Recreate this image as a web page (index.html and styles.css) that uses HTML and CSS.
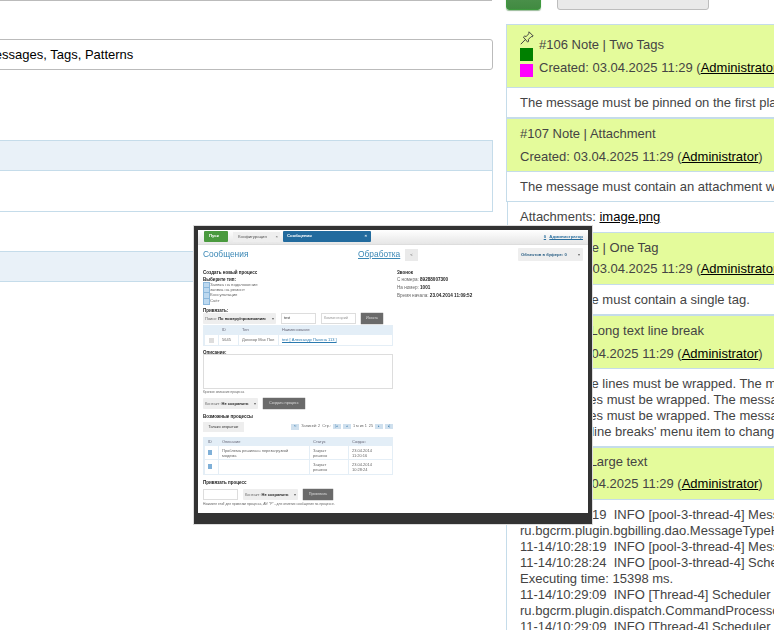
FILE: index.html
```html
<!DOCTYPE html>
<html lang="en">
<head>
<meta charset="utf-8">
<title>Messages</title>
<link rel="stylesheet" href="styles.css">
</head>
<body>
<div class="page">
  <section class="left">
    <div class="top-line"></div>
    <div class="text-field">Messages, Tags, Patterns</div>
    <div class="panel">
      <div class="panel-head"></div>
      <div class="panel-body"></div>
    </div>
    <div class="panel panel-second">
      <div class="panel-head"></div>
    </div>
  </section>

  <section class="right">
    <div class="actions">
      <div class="btn-green"></div>
      <div class="btn-gray"></div>
    </div>

    <article class="card">
      <header class="card-head tagged">
        <div class="tags">
          <svg class="pin" viewBox="0 0 14 14" width="14" height="14"><path d="M9 .8l4.200 4.200-1 .8-1-.2-2.800 2.800.2 1.800-.9 1L3.400 6.100l1-.9 1.800.2L9 2.600 8.800 1.600zM5.500 8.400L.8 13.200" fill="none" stroke="#444" stroke-width="1" stroke-linejoin="round"/></svg>
          <span class="tag tag-green"></span>
          <span class="tag tag-magenta"></span>
        </div>
        <div class="head-text">
          <div class="line">#106 Note | Two Tags</div>
          <div class="line">Created: 03.04.2025 11:29 (<a href="#">Administrator</a>)</div>
        </div>
      </header>
      <div class="card-body"><div class="row">The message must be pinned on the first place in the list of messages.</div></div>
    </article>

    <article class="card">
      <header class="card-head">
        <div class="line">#107 Note | Attachment</div>
        <div class="line">Created: 03.04.2025 11:29 (<a href="#">Administrator</a>)</div>
      </header>
      <div class="card-body"><div class="row">The message must contain an attachment with an image file.</div></div>
    </article>
    <div class="attachments">Attachments: <a href="#">image.png</a></div>

    <article class="card card-flat">
      <header class="card-head tagged">
        <div class="tags tags-single"><span class="tag tag-green"></span></div>
        <div class="head-text head-tight">
          <div class="line">#108 Note | One Tag</div>
          <div class="line">Created: 03.04.2025 11:29 (<a href="#">Administrator</a>)</div>
        </div>
      </header>
      <div class="card-body"><div class="row">The message must contain a single tag.</div></div>
    </article>

    <article class="card">
      <header class="card-head">
        <div class="line">#109 Note | Long text line break</div>
        <div class="line">Created: 03.04.2025 11:29 (<a href="#">Administrator</a>)</div>
      </header>
      <div class="card-body">
        <div class="row">The message lines must be wrapped. The message lines must be wrapped.</div>
        <div class="row">message lines must be wrapped. The message lines must be wrapped.</div>
        <div class="row">message lines must be wrapped. The message lines must be wrapped.</div>
        <div class="row">Use the 'No line breaks' menu item to change the mode.</div>
      </div>
    </article>

    <article class="card">
      <header class="card-head card-head-tight">
        <div class="line">#110 Note | Large text</div>
        <div class="line">Created: 03.04.2025 11:29 (<a href="#">Administrator</a>)</div>
      </header>
      <div class="card-body">
        <div class="row">11-14/10:28:19  INFO [pool-3-thread-4] MessageTypeHelper</div>
        <div class="row">ru.bgcrm.plugin.bgbilling.dao.MessageTypeHelper</div>
        <div class="row">11-14/10:28:19  INFO [pool-3-thread-4] MessageTypeHelper</div>
        <div class="row">11-14/10:28:24  INFO [pool-3-thread-4] Scheduler</div>
        <div class="row">Executing time: 15398 ms.</div>
        <div class="row">11-14/10:29:09  INFO [Thread-4] Scheduler run</div>
        <div class="row">ru.bgcrm.plugin.dispatch.CommandProcessor</div>
        <div class="row">11-14/10:29:09  INFO [Thread-4] Scheduler run</div>
      </div>
    </article>
  </section>

  <aside class="preview">
    <div class="shot">
      <div class="m-bar">
        <span class="m-start">Пуск</span>
        <span class="m-tab">Конфигурация<i>×</i></span>
        <span class="m-tab m-tab-active">Сообщения<i>×</i></span>
        <span class="m-user"><b>0</b> <b>Администратор</b></span>
      </div>
      <div class="m-content">
        <div class="m-title-row">
          <span class="m-title">Сообщения</span>
          <a class="m-title-link" href="#">Обработка</a>
          <span class="m-back">&lt;</span>
          <span class="m-buffer"><b>Объектов в буфере: 0</b><i>▾</i></span>
        </div>
        <div class="m-columns">
          <div class="m-main">
            <div class="m-label">Создать новый процесс</div>
            <div class="m-label">Выберите тип:</div>
            <ul class="m-types">
              <li>Заявка на подключение</li>
              <li>заявка на ремонт</li>
              <li>Консультация</li>
              <li>Счёт</li>
            </ul>
            <div class="m-label m-bind">Привязать:</div>
            <div class="m-controls m-search">
              <span class="m-select m-w72">Поиск: <b>По номеру/примечанию</b><i>▾</i></span>
              <span class="m-input m-w35">test</span>
              <span class="m-input m-w35 m-muted">Комментарий</span>
              <span class="m-dark m-w22">Искать</span>
            </div>
            <div class="m-table m-table-a">
              <div class="m-tr m-th"><span></span><span>ID</span><span>Тип</span><span>Наименование</span></div>
              <div class="m-tr m-td"><span><em class="m-check"></em></span><span>5645</span><span>Договор Мах Пол</span><span><a href="#">test [ Александр Панина 113 ]</a></span></div>
            </div>
            <div class="m-label m-desc">Описание:</div>
            <div class="m-textarea"></div>
            <div class="m-hint">Краткое описание процесса</div>
            <div class="m-controls m-contact">
              <span class="m-select m-w55">Контакт: <b>Не сохранять</b><i>▾</i></span>
              <span class="m-dark m-w42">Создать процесс</span>
            </div>
            <div class="m-label m-possible">Возможные процессы</div>
            <div class="m-pager-row">
              <span class="m-light">Только открытые</span>
              <span class="m-pager">
                <em class="m-page m-refresh">↻</em><span>Записей: 2</span><span>Стр.:</span>
                <em class="m-page">|◂</em><em class="m-page">◂</em><span>1 м из 1</span><span>25</span><em class="m-page">▸</em><em class="m-page">▸|</em>
              </span>
            </div>
            <div class="m-table m-table-b">
              <div class="m-tr m-th"><span>ID</span><span>Описание</span><span>Статус</span><span>Создан</span></div>
              <div class="m-tr m-td m-r1"><span><em class="m-box"></em></span><span>Проблема решилась перезагрузкой<br>модема</span><span>Закрыт<br>решено</span><span>23.04.2014<br>11:20:16</span></div>
              <div class="m-tr m-td m-r2"><span><em class="m-box"></em></span><span></span><span>Закрыт<br>решено</span><span>23.04.2014<br>10:28:24</span></div>
            </div>
            <div class="m-label m-link-proc">Привязать процесс</div>
            <div class="m-controls m-link-row">
              <span class="m-input m-w35"></span>
              <span class="m-select m-w55">Контакт: <b>Не сохранять</b><i>▾</i></span>
              <span class="m-dark m-w30">Привязать</span>
            </div>
            <div class="m-hint m-hint-last">Нажмите end! для привязки процесса, Alt! "P" - для отметки сообщения на процессе.</div>
          </div>
          <div class="m-side">
            <div class="m-label">Звонок</div>
            <div class="m-info">С номера: <b>89288007300</b></div>
            <div class="m-info">На номер: <b>1001</b></div>
            <div class="m-info">Время начала: <b>23.04.2014 11:09:52</b></div>
          </div>
        </div>
      </div>
    </div>
  </aside>
</div>
</body>
</html>
```

FILE: styles.css
```css
* { box-sizing: border-box; }
html, body { margin: 0; padding: 0; background: #fff; }
body { font-family: "Liberation Sans", Arial, sans-serif; font-size: 13px; color: #444; }
a { color: #000; text-decoration: underline; }

.page { position: relative; width: 774px; height: 630px; overflow: hidden; display: flex; background: #fff; }

/* left column */
.left { width: 493px; flex: none; }
.top-line { height: 1px; margin-right: 1px; background: #bbb; }
.text-field {
  margin: 38px 0 0 -40px; height: 31px; padding-left: 23px;
  border: 1px solid #bbb; border-radius: 3px;
  color: #000; line-height: 29px;
}
.panel { margin: 70px 0 0 -40px; border: 1px solid #c5dcea; }
.panel-head { height: 29px; background: #e9f1f8; }
.panel-body { height: 41px; border-top: 1px solid #c5dcea; background: #fff; }
.panel-second { margin-top: 39px; }

/* right column */
.right { flex: none; width: 640px; margin-left: 13px; }
.actions { display: flex; gap: 16px; height: 30px; margin-top: -20px; margin-bottom: 14px; }
.btn-green { width: 35px; height: 30px; background: linear-gradient(#5a9a5a, #418a41); border: 1px solid #3f9a3f; border-radius: 3px; box-shadow: 0 1px 1px #9b9; }
.btn-gray { width: 152px; height: 30px; background: #e9e9e9; border: 1px solid #bdbdbd; border-radius: 3px; }

.card { border: 1px solid #c5dcea; background: #fff; }
.card-head { padding: 3px 13px; background: #e4fb9b; border-bottom: 1px solid #c5dcea; }
.tagged { display: flex; gap: 5px; padding: 0 13px; height: 63px; }
.line { height: 23px; line-height: 23px; white-space: nowrap; }
.card-head-tight { padding: 3px 13px 4px; }
.card-head-tight .line { height: 22px; line-height: 22px; }
.tags { width: 14px; flex: none; display: flex; flex-direction: column; align-items: flex-start; padding-top: 6px; }
.pin { display: block; margin-bottom: 3px; }
.tag { display: block; width: 13px; height: 13px; margin-bottom: 3px; }
.tag-green { background: #008000; }
.tag-magenta { background: #ff00ff; }
.head-text { padding-top: 8px; }

.card-body { padding: 7px 13px 6px; }
.row { line-height: 16px; white-space: pre; }

.attachments { height: 30px; margin-left: 1px; padding: 7px 12px 0; border-left: 1px solid #c5dcea; line-height: 16px; white-space: nowrap; }
.card-flat .tagged { height: 52px; }
.tags-single { padding-top: 12px; }
.head-tight { padding-top: 4px; }
.head-tight .line { height: 21px; line-height: 21px; }

/* preview overlay */
.preview {
  position: absolute; left: 194px; top: 226px; width: 398px; height: 298px;
  border: solid #333; border-width: 4px 4px 11px 4px;
  box-shadow: 0 0 0 1px #ddd;
  background: #fff;
}
.shot { height: 100%; overflow: hidden; font-size: 4.3px; line-height: 7px; color: #666; filter: blur(.45px); }
.shot b { color: #222; }
.shot i { font-style: normal; }
.shot em { font-style: normal; }

.m-bar { height: 15px; padding: 1px 5px 0 6px; display: flex; align-items: flex-start; background: linear-gradient(#fff, #e6e6e6); border-bottom: 1px solid #ddd; }
.m-start { width: 24px; height: 11px; padding-left: 5px; line-height: 10px; background: #4a9a3e; color: #fff; font-weight: bold; border-radius: 1px; }
.m-tab { display: flex; justify-content: space-between; width: 47px; height: 10px; margin: 1px 0 0 5px; padding: 0 2px 0 5px; line-height: 10px; background: #eee; color: #555; }
.m-tab-active { width: 88px; height: 11px; margin: 0 0 0 3px; padding: 0 4px 0 4px; background: #226b9e; color: #fff; font-weight: bold; border-radius: 1px; }
.m-user { margin-left: auto; padding-top: 1px; line-height: 9px; }
.m-user b { color: #2a6f9f; text-decoration: underline; margin-left: 2px; }

.m-content { padding: 3px 5px 0; }
.m-title-row { display: flex; align-items: center; height: 13px; }
.m-title { width: 155px; font-size: 8.4px; line-height: 15px; color: #3a87b5; }
.m-title-link { width: 42px; font-size: 8.4px; line-height: 15px; color: #3a87b5; }
.m-back { width: 13px; height: 12px; margin-left: 5px; background: #eaeaea; text-align: center; line-height: 12px; }
.m-buffer { display: flex; justify-content: space-between; width: 65px; height: 13px; margin-left: auto; padding: 0 3px; background: #eee; line-height: 13px; border-radius: 1px; font-size: 4.2px; }
.m-buffer b { color: #2a5f85; }

.m-columns { display: flex; gap: 4px; margin-top: 8px; }
.m-main { width: 190px; flex: none; }
.m-label { height: 7px; font-weight: bold; font-size: 4.5px; color: #222; white-space: nowrap; }
.m-types { list-style: none; margin: -1.5px 0 0; padding: 0; }
.m-types li { position: relative; height: 5.4px; line-height: 5.4px; padding-left: 7px; white-space: nowrap; font-size: 4.3px; }
.m-types li::before { content: ""; position: absolute; left: 0; top: 0; width: 5px; height: 5px; background: #bcd8ef; border: 1px solid #8cb8dc; }
.m-bind { margin-top: 4px; }

.m-controls { display: flex; gap: 5px; height: 11px; }
.m-search { margin-top: -1px; }
.m-select { display: flex; gap: 1px; align-items: center; height: 11px; padding: 0 2px; background: #eee; border-radius: 1px; white-space: nowrap; overflow: hidden; font-size: 4px; }
.m-select i { margin-left: auto; }
.m-input { height: 11px; padding-left: 2px; border: 1px solid #ddd; line-height: 9px; color: #333; background: #fff; font-size: 3.8px; }
.m-muted { color: #999; }
.m-dark { height: 11px; background: #6a6a6a; color: #ddd; text-align: center; line-height: 11px; white-space: nowrap; box-shadow: 0 0 1px #444; font-size: 3.8px; }
.m-light { width: 41px; height: 10px; background: #eee; text-align: center; line-height: 10px; color: #333; font-size: 3.8px; }
.m-w72 { width: 73px; } .m-w55 { width: 55px; } .m-w35 { width: 35px; } .m-w42 { width: 42px; } .m-w30 { width: 30px; } .m-w22 { width: 22px; }

.m-table { margin-top: 1px; border: 1px solid #e4eef6; font-size: 4px; }
.m-tr { display: grid; }
.m-table-a .m-tr { grid-template-columns: 14px 20px 40px 1fr; }
.m-table-b .m-tr { grid-template-columns: 14px 91px 39px 1fr; }
.m-tr > span { padding: 0 3px; border-left: 1px solid #e4eef6; overflow: hidden; }
.m-th { height: 8.5px; background: #e3eef7; line-height: 8.5px; color: #667; }
.m-table-a .m-td { height: 10px; line-height: 10px; white-space: nowrap; }
.m-td a { color: #2a7ab0; }
.m-check { display: block; width: 5px; height: 5px; margin: 3px 0 0 1px; background: #ddd; }
.m-desc { margin-top: 3px; }
.m-textarea { height: 35px; margin-top: -1.5px; border: 1px solid #ddd; }
.m-hint { height: 5px; margin-top: 1px; font-size: 3.2px; line-height: 5px; color: #666; white-space: nowrap; }
.m-contact { margin-top: 3px; }
.m-possible { margin-top: 3.5px; }
.m-pager-row { display: flex; justify-content: space-between; margin-top: 2.5px; height: 10px; }
.m-pager { display: flex; align-items: center; gap: 2px; height: 9px; white-space: nowrap; font-size: 3.8px; }
.m-page { display: block; width: 8px; height: 5px; background: #cfe0ee; line-height: 5px; text-align: center; font-size: 3px; color: #37a; }
.m-refresh { height: 6px; }
.m-table-b { margin-top: 4.5px; }
.m-r1 { height: 14px; border-bottom: 1px solid #e4eef6; }
.m-r2 { height: 14px; }
.m-table-b .m-td { line-height: 5px; }
.m-table-b .m-td > span { padding-top: 2px; }
.m-box { display: block; width: 4px; height: 5px; margin-top: 2px; background: #7fb0d8; }
.m-link-proc { margin-top: 3.5px; }
.m-link-row { margin-top: 3.5px; }
.m-hint-last { margin-top: 1.5px; font-size: 3.35px; }

.m-side { flex: 1; }
.m-info { height: 8px; line-height: 8px; white-space: nowrap; font-size: 4.6px; }
```
